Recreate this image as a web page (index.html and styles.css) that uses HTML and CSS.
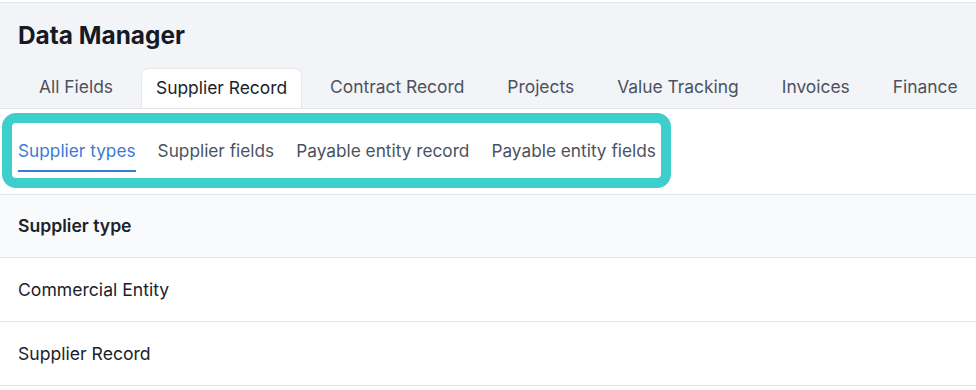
FILE: index.html
```html
<!DOCTYPE html>
<html lang="en">
<head>
    <meta charset="UTF-8">
    <title>Data Manager</title>
    <link rel="stylesheet" href="styles.css">
</head>
<body>
    <div class="header">
        <h1>Data Manager</h1>
        <div class="tabs">
            <div class="tab">All Fields</div>
            <div class="tab active">Supplier Record</div>
            <div class="tab">Contract Record</div>
            <div class="tab">Projects</div>
            <div class="tab">Value Tracking</div>
            <div class="tab">Invoices</div>
            <div class="tab">Finance</div>
        </div>
    </div>

    <div class="subnav">
        <div class="highlight">
            <div class="subtab active">Supplier types</div>
            <div class="subtab">Supplier fields</div>
            <div class="subtab">Payable entity record</div>
            <div class="subtab">Payable entity fields</div>
        </div>
    </div>

    <div class="table">
        <div class="row head">Supplier type</div>
        <div class="row">Commercial Entity</div>
        <div class="row">Supplier Record</div>
    </div>
</body>
</html>
```

FILE: styles.css
```css
* {
    box-sizing: border-box;
    font-family: Inter, Roboto, "Liberation Sans", sans-serif;
}

body {
    margin: 0;
    padding-top: 2px;
    background: #ffffff;
    color: #1f2430;
    overflow: hidden;
}

.header {
    background: #f3f4f7;
    border-top: 1px solid #e6e7eb;
    border-bottom: 1px solid #e2e4e8;
}

h1 {
    margin: 0;
    padding: 17px 18px 0;
    height: 65px;
    font-size: 24.4px;
    line-height: 30px;
    font-weight: 650;
    color: #151a26;
}

.tabs {
    display: flex;
    gap: 13px;
    padding-left: 24px;
    white-space: nowrap;
}

.tab {
    flex-shrink: 0;
    height: 40px;
    line-height: 38px;
    padding: 0 15px;
    font-size: 17.4px;
    color: #4b5260;
    border-radius: 7px 7px 0 0;
}

.tab.active {
    background: #ffffff;
    color: #1a1f2b;
    border: 1px solid #e6e7eb;
    border-bottom: none;
    padding: 0 14px;
}

.subnav {
    padding: 4px 0 6px 2px;
    border-bottom: 1px solid #e3e5e9;
}

.highlight {
    display: inline-flex;
    gap: 22px;
    border: 10px solid #3ecfcd;
    border-radius: 14px;
    padding: 0 5px 6px 6px;
    background: #ffffff;
    white-space: nowrap;
}

.subtab {
    padding: 16px 0 7px;
    line-height: 24px;
    font-size: 17.25px;
    color: #4b5260;
    border-bottom: 2px solid transparent;
}

.subtab.active {
    color: #3a7bd5;
    border-bottom-color: #3a7bd5;
}

.row {
    height: 64px;
    line-height: 63px;
    padding-left: 18px;
    font-size: 17.6px;
    color: #1c212c;
    border-bottom: 1px solid #e3e5e9;
}

.row.head {
    height: 63px;
    line-height: 62px;
    background: #f9fafb;
    font-weight: 600;
}
```
